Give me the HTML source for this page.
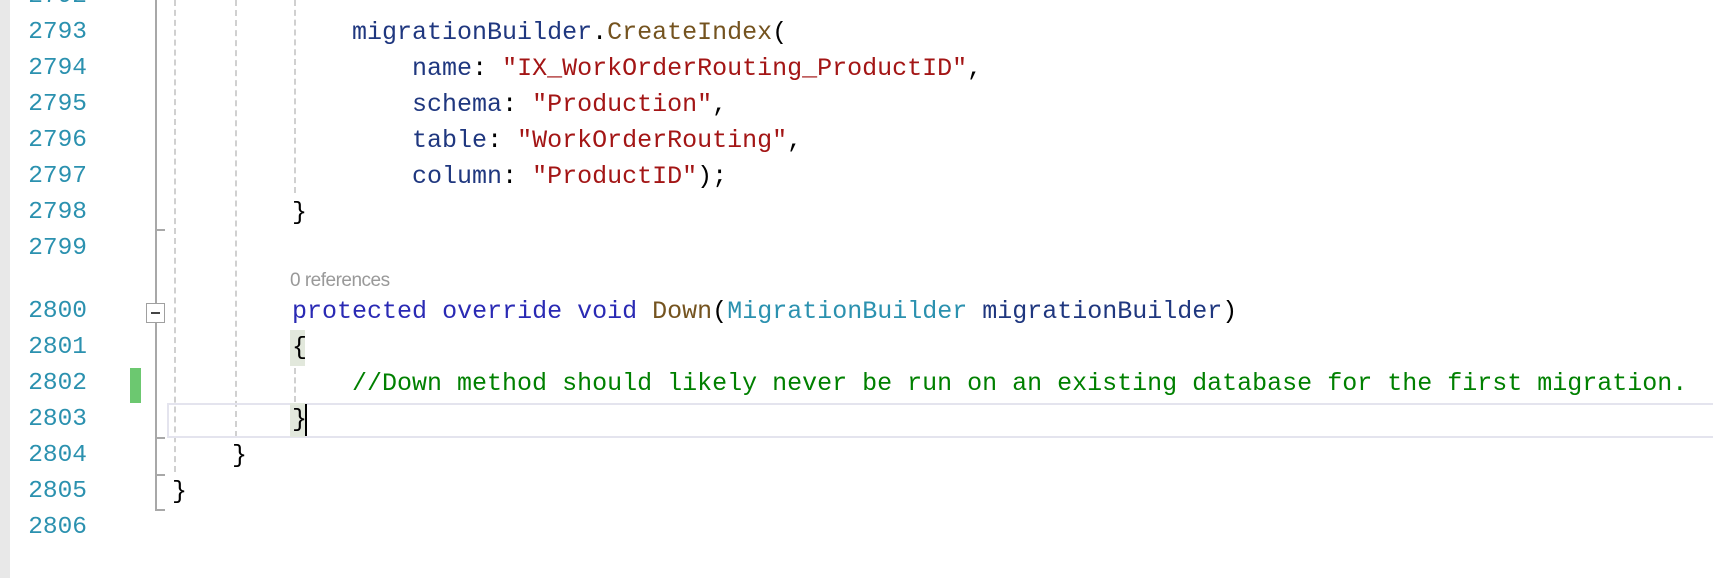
<!DOCTYPE html>
<html><head><meta charset="utf-8"><style>
html,body{margin:0;padding:0;background:#fff;width:1713px;height:578px;overflow:hidden;position:relative}
.g{position:absolute;left:0;top:0;width:10px;height:578px;background:#e8e8e8}
.ln{position:absolute;left:0;width:87px;text-align:right;font:24.5px "Liberation Mono",monospace;color:#2b91af;height:36px;line-height:36px}
.c{position:absolute;left:172px;font:25px "Liberation Mono",monospace;white-space:pre;height:36px;line-height:36px;color:#000}
.k{color:#2a2ab4}.v{color:#1f377f}.m{color:#74531f}.s{color:#a31515}.t{color:#2b91af}.cm{color:#008000}
.gd{position:absolute;width:0;border-left:2px dashed #d0d0d0}
.fl{position:absolute;left:155px;width:2px;background:#a8a8a8}
.tk{position:absolute;left:155px;width:10px;height:2px;background:#a8a8a8}
</style></head><body>
<div class="g"></div>
<div class="ln" style="top:-21px">2792</div>
<div class="ln" style="top:15px">2793</div>
<div class="ln" style="top:51px">2794</div>
<div class="ln" style="top:87px">2795</div>
<div class="ln" style="top:123px">2796</div>
<div class="ln" style="top:159px">2797</div>
<div class="ln" style="top:195px">2798</div>
<div class="ln" style="top:231px">2799</div>
<div class="ln" style="top:294px">2800</div>
<div class="ln" style="top:330px">2801</div>
<div class="ln" style="top:366px">2802</div>
<div class="ln" style="top:402px">2803</div>
<div class="ln" style="top:438px">2804</div>
<div class="ln" style="top:474px">2805</div>
<div class="ln" style="top:510px">2806</div>

<div class="fl" style="top:0;height:511px"></div>
<div class="tk" style="top:229px"></div>
<div class="tk" style="top:437px"></div>
<div class="tk" style="top:474px"></div>
<div class="tk" style="top:509px"></div>
<div style="position:absolute;left:146px;top:303px;width:17px;height:18px;border:1px solid #a0a0a0;background:#fff"><div style="position:absolute;left:4px;top:8px;width:9px;height:2px;background:#444"></div></div>
<div style="position:absolute;left:130px;top:368px;width:11px;height:35px;background:#6cc870"></div>

<div class="gd" style="left:174px;top:0;height:472px"></div>
<div class="gd" style="left:235px;top:0;height:437px"></div>
<div class="gd" style="left:294px;top:0;height:193px"></div>
<div class="gd" style="left:294px;top:368px;height:34px"></div>

<div style="position:absolute;left:167px;top:403px;right:-2px;height:31px;border:2px solid #e4e4ee"></div>
<div style="position:absolute;left:290px;top:330px;width:15px;height:36px;background:#e2e8dc"></div>
<div style="position:absolute;left:290px;top:403px;width:15px;height:34px;background:#e2e8dc"></div>
<div style="position:absolute;left:305px;top:404px;width:2px;height:32px;background:#000"></div>

<div class="c" style="top:15px">            <span class="v">migrationBuilder</span>.<span class="m">CreateIndex</span>(</div>
<div class="c" style="top:51px">                <span class="v">name</span>: <span class="s">"IX_WorkOrderRouting_ProductID"</span>,</div>
<div class="c" style="top:87px">                <span class="v">schema</span>: <span class="s">"Production"</span>,</div>
<div class="c" style="top:123px">                <span class="v">table</span>: <span class="s">"WorkOrderRouting"</span>,</div>
<div class="c" style="top:159px">                <span class="v">column</span>: <span class="s">"ProductID"</span>);</div>
<div class="c" style="top:195px">        }</div>
<div style="position:absolute;left:290px;top:270px;font:19px 'Liberation Sans',sans-serif;color:#999;letter-spacing:-0.5px">0 references</div>
<div class="c" style="top:294px">        <span class="k">protected</span> <span class="k">override</span> <span class="k">void</span> <span class="m">Down</span>(<span class="t">MigrationBuilder</span> <span class="v">migrationBuilder</span>)</div>
<div class="c" style="top:330px">        {</div>
<div class="c" style="top:366px">            <span class="cm">//Down method should likely never be run on an existing database for the first migration.</span></div>
<div class="c" style="top:402px">        }</div>
<div class="c" style="top:438px">    }</div>
<div class="c" style="top:474px">}</div>
</body></html>
